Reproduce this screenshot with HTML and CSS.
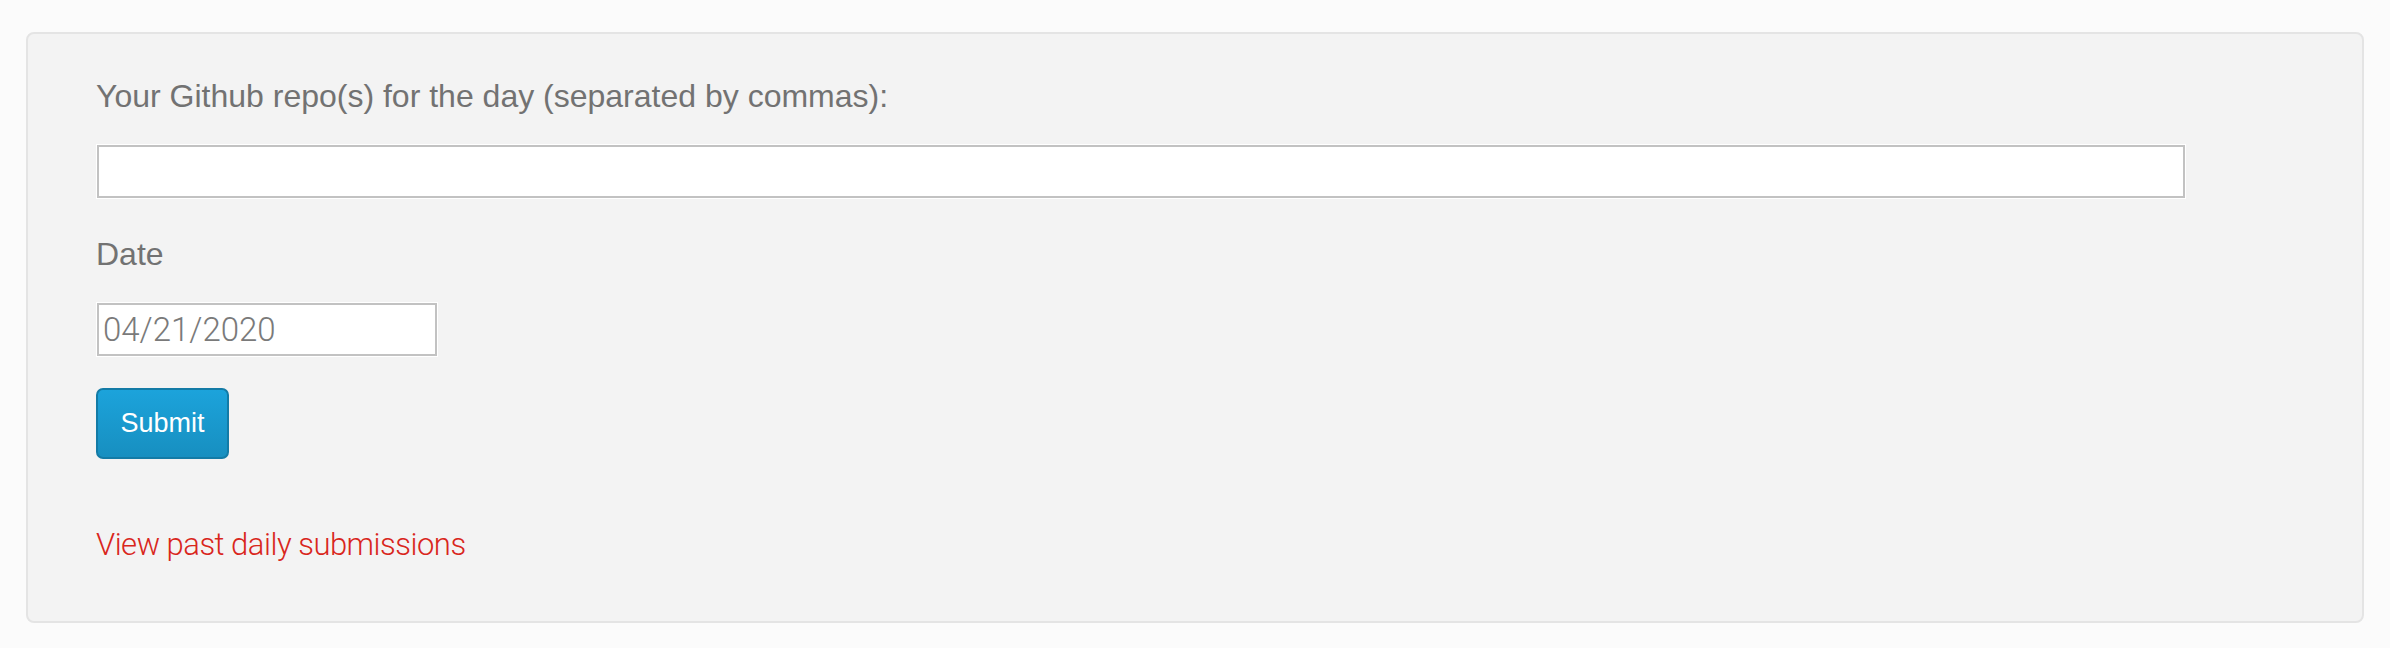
FILE: index.html
```html
<!DOCTYPE html>
<html>
<head>
<meta charset="utf-8">
<link rel="stylesheet" href="styles.css">
</head>
<body>
<div class="page">
  <form class="well">
    <label class="field-label" for="repos">Your Github repo(s) for the day (separated by commas):</label>
    <input class="text-input repos" id="repos" type="text">
    <label class="field-label date-label" for="date">Date</label>
    <input class="text-input date" id="date" type="text" value="04/21/2020">
    <div class="actions"><button class="btn" type="button">Submit</button></div>
    <a class="past-link" href="#">View past daily submissions</a>
  </form>
</div>
</body>
</html>
```

FILE: styles.css
```css
html, body {
  margin: 0;
  padding: 0;
  background: #fbfbfb;
}
body {
  font-family: "Liberation Sans", Arial, sans-serif;
}
.page {
  padding: 32px 26px 0 26px;
}
.well {
  display: flex;
  flex-direction: column;
  align-items: flex-start;
  background: #f3f3f3;
  border: 2px solid #e4e4e4;
  border-radius: 8px;
  padding: 40px 68px 54px 68px;
  height: 591px;
  box-sizing: border-box;
}
.field-label {
  font-size: 32px;
  line-height: 44px;
  color: #727272;
}
.text-input {
  box-sizing: border-box;
  height: 54px;
  border: 2px solid #c2c2c2;
  box-shadow: 0 0 0 1px #ffffff;
  background: #fff;
  margin: 0 0 0 1px;
  padding: 0 6px;
  outline: none;
}
.repos {
  width: 2088px;
  margin-top: 27px;
}
.date-label {
  margin-top: 34px;
}
.date {
  width: 340px;
  margin-top: 27px;
  font-family: "Roboto", "Liberation Sans", sans-serif;
  font-weight: 300;
  font-size: 33px;
  color: #7a7a7a;
  padding: 0 4px;
}
.actions {
  margin-top: 32px;
}
.btn {
  box-sizing: border-box;
  height: 71px;
  width: 133px;
  padding: 0;
  font-family: "Liberation Sans", Arial, sans-serif;
  font-size: 27px;
  color: #fff;
  background: linear-gradient(#1ca3db, #178fc0);
  border: 2px solid #137ba6;
  border-radius: 7px;
  cursor: pointer;
}
.past-link {
  margin-top: 64px;
  font-family: "Roboto", "Liberation Sans", sans-serif;
  font-weight: 300;
  font-size: 31px;
  letter-spacing: -0.5px;
  line-height: 44px;
  color: #d9261c;
  text-decoration: none;
}
```
